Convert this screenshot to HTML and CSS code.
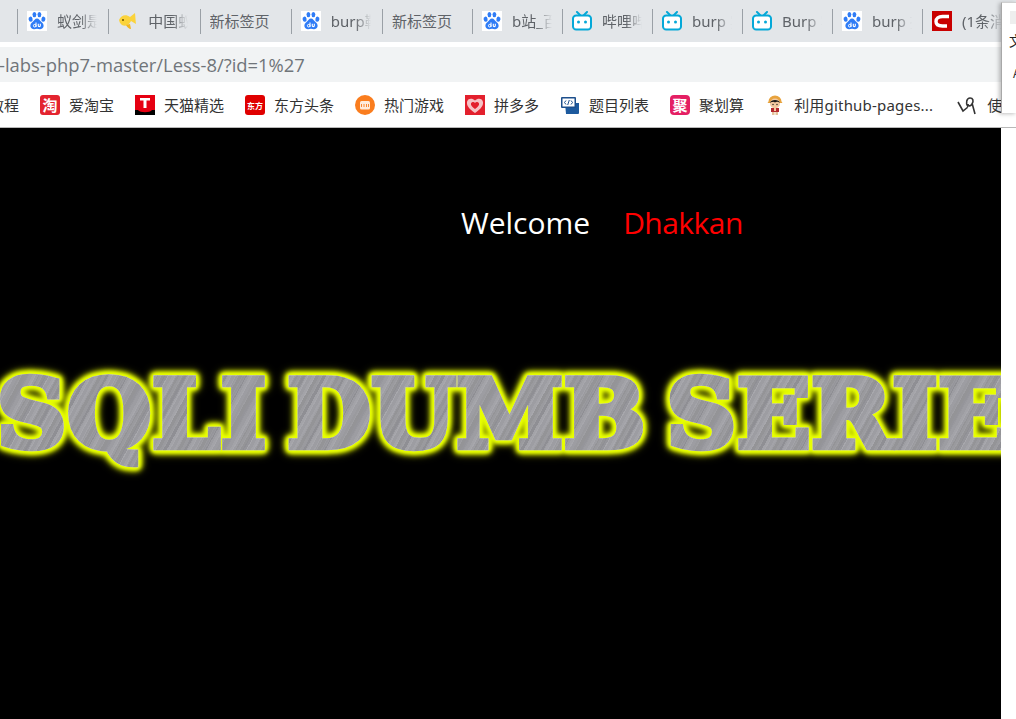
FILE: index.html
```html
<!DOCTYPE html>
<html lang="zh-CN">
<head>
<meta charset="utf-8">
<title>Less-8</title>
<link rel="stylesheet" href="styles.css">
</head>
<body>
<svg class="defs" width="0" height="0" aria-hidden="true">
  <symbol id="baidu" viewBox="0 0 20 20">
    <rect width="20" height="20" fill="#fff"/>
    <g fill="#2f7cf6">
      <ellipse cx="3.600" cy="8.200" rx="2" ry="2.600" transform="rotate(-12 3.600 8.200)"/>
      <ellipse cx="7.400" cy="3.600" rx="1.900" ry="2.700"/>
      <ellipse cx="12.400" cy="3.600" rx="1.900" ry="2.700"/>
      <ellipse cx="16.400" cy="8.200" rx="2" ry="2.600" transform="rotate(12 16.400 8.200)"/>
      <path d="M10 7.600c-2 0-2.800 2-4.200 3.200C4.300 12 2.900 13.500 3.500 15.800c.5 1.900 2.200 2.500 3.700 2.400 1-.1 1.900-.4 2.800-.4s1.800.3 2.800.4c1.500.1 3.200-.5 3.700-2.400.6-2.300-.8-3.800-2.300-5C12.800 9.600 12 7.600 10 7.600z"/>
    </g>
    <path d="M9 11.400v4.700M11.300 12.800v2.300c0 .8 2 .8 2 0v-2.300" fill="none" stroke="#fff" stroke-width="1.100"/>
    <circle cx="7.700" cy="14.700" r="1.300" fill="none" stroke="#fff" stroke-width="1"/>
  </symbol>
  <symbol id="bili" viewBox="0 0 20 20">
    <path d="M5 1l3 3M15 1l-3 3" stroke="#05a8d8" stroke-width="2" fill="none" stroke-linecap="round"/>
    <rect x="1" y="4.400" width="18" height="14.200" rx="3.200" fill="#fff" stroke="#05a8d8" stroke-width="2"/>
    <circle cx="6.500" cy="11" r="1.500" fill="#05a8d8"/>
    <circle cx="13.500" cy="11" r="1.500" fill="#05a8d8"/>
  </symbol>
</svg>

<div class="tabs">
  <div class="tab tab-wide"><svg class="ico"><use href="#baidu"/></svg><span class="tab-text">蚁剑是一个工具</span></div>
  <div class="tab tab-wide"><svg class="ico" viewBox="0 0 20 20"><path d="M1 9c2-5 7-6 11-3l5-4c.5 4 .5 8 1 11l-5-3c-2 5-8 6-10 3C2 12 1.500 11 1 9z" fill="#fbd33b"/><path d="M8 14c1 2 3 4 5 4l-1-5z" fill="#f3b71f"/><circle cx="5" cy="9" r="1" fill="#6b5200"/><circle cx="3.500" cy="3" r=".8" fill="#f4e9b0"/></svg><span class="tab-text">中国蚁剑下载</span></div>
  <div class="tab tab-wide tab-plain"><span class="tab-text">新标签页</span></div>
  <div class="tab tab-wide"><svg class="ico"><use href="#baidu"/></svg><span class="tab-text">burp靶场教程</span></div>
  <div class="tab tab-plain"><span class="tab-text">新标签页</span></div>
  <div class="tab"><svg class="ico"><use href="#baidu"/></svg><span class="tab-text">b站_百度搜索</span></div>
  <div class="tab"><svg class="ico"><use href="#bili"/></svg><span class="tab-text">哔哩哔哩视频</span></div>
  <div class="tab"><svg class="ico"><use href="#bili"/></svg><span class="tab-text">burp 实战</span></div>
  <div class="tab"><svg class="ico"><use href="#bili"/></svg><span class="tab-text">Burp 实战</span></div>
  <div class="tab"><svg class="ico"><use href="#baidu"/></svg><span class="tab-text">burp 抓包</span></div>
  <div class="tab"><svg class="ico" viewBox="0 0 20 20"><rect width="20" height="20" fill="#c90000"/><path d="M17 5.500H10.500C6.500 5.500 4 7.500 4 10.500s2.500 4.500 6.500 4.500H15" fill="none" stroke="#fff" stroke-width="3.400"/></svg><span class="tab-text">(1条消息)</span></div>
</div>

<div class="gap-line"></div>

<div class="address"><span class="url">-labs-php7-master/Less-8/?id=1%27</span></div>

<div class="bookmarks">
  <span class="bm bm-first">教程</span>
  <span class="bm"><svg class="ico" viewBox="0 0 20 20"><rect width="20" height="20" rx="3" fill="#e3242f"/><text x="10" y="15.500" class="ico-t ico-t-lg">淘</text></svg>爱淘宝</span>
  <span class="bm"><svg class="ico" viewBox="0 0 20 20"><rect width="20" height="15" fill="#e60012"/><path d="M0 15h20v5H0z" fill="#000"/><path d="M3 15c2 3 12 3 14 0z" fill="#e60012"/><path d="M5 3h10v2.500h-3.500V13h-3V5.500H5z" fill="#fff"/></svg>天猫精选</span>
  <span class="bm"><svg class="ico" viewBox="0 0 20 20"><rect width="20" height="20" rx="3" fill="#e00000"/><text x="10" y="13.500" class="ico-t ico-t-sm">东方</text></svg>东方头条</span>
  <span class="bm"><svg class="ico" viewBox="0 0 20 20"><circle cx="10" cy="10" r="10" fill="#fa7d1e"/><rect x="5" y="6" width="10" height="8.500" rx="1.500" fill="#fff" fill-opacity=".85"/><path d="M6.500 9v3M9 9v3M11.500 9v3M13.500 9v3" stroke="#fa7d1e" stroke-width=".9"/></svg>热门游戏</span>
  <span class="bm"><svg class="ico" viewBox="0 0 20 20"><rect width="20" height="20" fill="#e3202d"/><path d="M10 18C4 14 1.500 10.500 2 7c.5-3.500 5-4.500 8-1.500C13 2.500 17.500 3.500 18 7c.5 3.500-2 7-8 11z" fill="#f6c3c6"/><path d="M10 14c-3-2-4.500-4-4-5.500S9 6.500 10 8c1-1.500 3.500-1 4 .5s-1 3.500-4 5.500z" fill="#e3202d"/></svg>拼多多</span>
  <span class="bm"><svg class="ico" viewBox="0 0 20 20"><path d="M5 8h14v10a1 1 0 0 1-1 1H6z" fill="#1d5a9e"/><rect x="1" y="2" width="15" height="11" rx="1" fill="#1d4f8c"/><rect x="2.500" y="3.500" width="12" height="8" fill="#fff"/><path d="M6 5.500L4.500 7.500 6 9.500M11 5.500l1.500 2-1.500 2M9.300 5L7.700 10" stroke="#1d4f8c" fill="none"/></svg>题目列表</span>
  <span class="bm"><svg class="ico" viewBox="0 0 20 20"><rect width="20" height="20" rx="4" fill="#e41f63"/><text x="10" y="15.500" class="ico-t ico-t-lg">聚</text></svg>聚划算</span>
  <span class="bm"><svg class="ico" viewBox="0 0 20 20"><path d="M3.500 6.500a6.500 6 0 0 1 13 0l1 1.500h-15z" fill="#e8a33d"/><circle cx="10" cy="8.500" r="5" fill="#f3c9a0"/><path d="M4.800 8c1-4 9.400-4 10.400 0-2-1.500-2.500-.5-3.500-1.200-1 .7-2.400.7-3.400 0C7.300 7.500 6.800 6.500 4.800 8z" fill="#1a1a1a"/><circle cx="8" cy="9.500" r=".7" fill="#1a1a1a"/><circle cx="12" cy="9.500" r=".7" fill="#1a1a1a"/><rect x="6" y="13" width="8" height="4" fill="#b3282d"/><path d="M9 13h2v3H9z" fill="#f3c9a0"/><rect x="7" y="17" width="2.500" height="3" fill="#e4c29a"/><rect x="10.500" y="17" width="2.500" height="3" fill="#e4c29a"/></svg><span class="bm-long">利用github-pages...</span></span>
  <span class="bm bm-last"><svg class="ico" viewBox="0 0 20 20"><path d="M1 7l5 9 5-4M11 12c-3-4-1-9 2-9s4 3 2 6-4 2-4 0M15 8l3 11" fill="none" stroke="#333" stroke-width="1.600"/></svg>使用教程</span>
</div>

<div class="page">
  <main class="stage">
    <p class="welcome"><span class="w-white">Welcome</span><span class="w-red">Dhakkan</span></p>
    <h1 class="banner">SQLI DUMB SERIES</h1>
  </main>
  <div class="side"></div>
</div>

<aside class="popup">
  <div class="popup-chip"></div>
  <div class="popup-char">文</div>
  <div class="popup-a">A</div>
</aside>
</body>
</html>
```

FILE: styles.css
```css
html, body {
  margin: 0;
  padding: 0;
  width: 1016px;
  height: 719px;
  overflow: hidden;
  background: #fff;
  font-family: "Noto Sans", "Noto Sans CJK SC", sans-serif;
}

.defs {
  position: absolute;
}

.ico {
  flex: none;
  width: 20px;
  height: 20px;
}

.ico-t {
  fill: #fff;
  text-anchor: middle;
  font-family: "Noto Sans CJK SC", sans-serif;
  font-weight: 700;
}

.ico-t-lg {
  font-size: 15px;
}

.ico-t-sm {
  font-size: 8px;
}

/* Tab strip */
.tabs {
  display: flex;
  height: 42px;
  padding-left: 17px;
  background: #e3e6e9;
  overflow: hidden;
}

.tab {
  flex: none;
  box-sizing: border-box;
  width: 90px;
  height: 25px;
  margin-top: 9px;
  padding: 2px 0 0 9px;
  display: flex;
  align-items: flex-start;
  gap: 10px;
  border-left: 1px solid #9aa0a6;
  overflow: hidden;
}

.tab-wide {
  width: 91.250px;
}

.tab-text {
  flex: none;
  width: 40px;
  font-size: 15px;
  line-height: 20px;
  color: #5f6368;
  white-space: nowrap;
  overflow: hidden;
  -webkit-mask-image: linear-gradient(90deg, #000 60%, transparent 100%);
  mask-image: linear-gradient(90deg, #000 60%, transparent 100%);
}

.tab-plain .tab-text {
  width: 60px;
  -webkit-mask-image: none;
  mask-image: none;
}

.gap-line {
  height: 5px;
  background: #fff;
}

/* Address bar */
.address {
  height: 35px;
  display: flex;
  align-items: center;
  background: #f1f3f4;
  overflow: hidden;
}

.url {
  margin-left: -1px;
  font-family: "Open Sans", "Noto Sans", sans-serif;
  font-size: 18.400px;
  color: #70757a;
  white-space: nowrap;
}

/* Bookmarks */
.bookmarks {
  height: 46px;
  box-sizing: border-box;
  border-bottom: 1px solid #b8b8b8;
  display: flex;
  align-items: center;
  gap: 21px;
  font-size: 15px;
  color: #333;
  white-space: nowrap;
  overflow: hidden;
}

.bm {
  flex: none;
  display: flex;
  align-items: center;
  gap: 9px;
}

.bm-long {
  letter-spacing: .2px;
}

.bm-first {
  margin-left: -11px;
}

.bm-last {
  margin-left: 3px;
  gap: 10px;
}

/* Page area */
.page {
  display: flex;
  height: 591px;
}

.stage {
  flex: none;
  width: 1001px;
  height: 591px;
  background: #000;
  overflow: hidden;
}

.side {
  flex: 1;
  background: #fff;
}

.welcome {
  margin: 76px 0 0 461px;
  display: flex;
  gap: 33px;
  font-family: "Open Sans", "Noto Sans", sans-serif;
  font-size: 30px;
  line-height: 38px;
}

.w-white {
  color: #fff;
}

.w-red {
  color: #f00;
  letter-spacing: -.55px;
}

.banner {
  margin: 113px 0 0 -3px;
  font-family: "DejaVu Serif", serif;
  font-weight: 700;
  font-size: 93px;
  line-height: 120px;
  letter-spacing: 1.300px;
  word-spacing: -14px;
  white-space: nowrap;
  color: transparent;
  background:
    repeating-linear-gradient(118deg, rgba(255, 255, 255, .07) 0 1px, rgba(0, 0, 0, .02) 1px 4px, rgba(255, 255, 255, .03) 4px 6px),
    repeating-linear-gradient(118deg, rgba(0, 0, 0, .06) 0 3px, rgba(255, 255, 255, .06) 3px 11px, rgba(0, 0, 0, .03) 11px 17px),
    #9c9ca1;
  -webkit-background-clip: text;
  background-clip: text;
  -webkit-text-stroke: 6.500px transparent;
  filter: drop-shadow(0 0 .6px #f0f0d8) drop-shadow(0 0 1.500px #e8ff00) drop-shadow(0 0 1.500px #e8ff00) drop-shadow(0 0 2px #e8ff00) drop-shadow(0 0 2px #e8ff00) drop-shadow(0 0 3px #c8d800);
  width: max-content;
  transform: scaleX(1.03);
  transform-origin: left center;
}

/* Popup overlapping the right edge */
.popup {
  position: absolute;
  left: 1001px;
  top: 2px;
  width: 15px;
  height: 110px;
  background: #fff;
  border-left: 1px solid #a8a8a8;
  border-top: 1px solid #d0d0d0;
  box-shadow: -2px 1px 4px rgba(0, 0, 0, .25);
  overflow: hidden;
  font-family: "Noto Sans CJK SC", sans-serif;
  color: #222;
}

.popup-chip {
  width: 12px;
  height: 13px;
  margin: 8px 0 0 8px;
  background: #eeeeee;
}

.popup-char {
  margin: 6px 0 0 7px;
  font-size: 14px;
  line-height: 20px;
}

.popup-a {
  margin: 16px 0 0 11px;
  font-size: 12px;
  line-height: 14px;
}
```
